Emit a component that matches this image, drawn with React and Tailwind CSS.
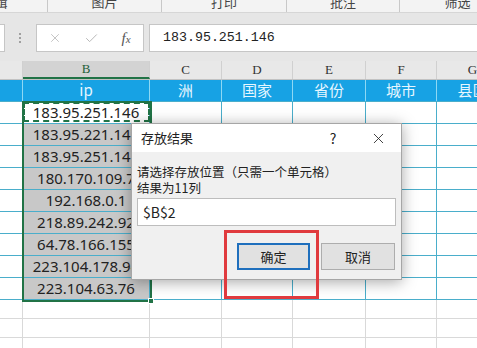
import React from "react";
import { X, Check } from "lucide-react";

const W = ["w-[23px]", "w-[127px]", "w-[72px]", "w-[71px]", "w-[73px]", "w-[71px]", "w-[72px]"];
const letters = ["", "B", "C", "D", "E", "F", "G"];
const titles = ["", "ip", "洲", "国家", "省份", "城市", "县区"];
const ips = [
  "183.95.251.146",
  "183.95.221.147",
  "183.95.251.145",
  "180.170.109.7",
  "192.168.0.1",
  "218.89.242.92",
  "64.78.166.155",
  "223.104.178.94",
  "223.104.63.76",
];

const cjk = { fontFamily: '"Noto Sans CJK SC", "Noto Sans", sans-serif' };

function Ribbon() {
  const groups = [
    ["w-[48px]", "编辑"],
    ["w-[114px]", "图片"],
    ["w-[125px]", "打印"],
    ["w-[113px]", "批注"],
    ["w-[116px]", "筛选"],
  ];
  return (
    <div className="flex h-[13px] bg-[#f3f3f3] border-b border-[#d6d6d6] overflow-hidden">
      {groups.map(([w, t], i) => (
        <div
          key={i}
          className={`${w} shrink-0 border-r border-[#c8c8c8] flex justify-center overflow-hidden`}
        >
          <span
            className={`text-[13px] leading-[13px] -mt-[5px] text-[#444] whitespace-nowrap ${i === 0 ? "ml-[-58px]" : ""}`}
            style={cjk}
          >
            {t}
          </span>
        </div>
      ))}
    </div>
  );
}

function FormulaBar() {
  return (
    <div className="bg-[#e6e6e6] pt-[11px] pb-[9px]">
      <div className="flex h-[28px]">
        <div className="w-[5px] bg-white border border-l-0 border-[#c6c6c6]" />
        <div className="w-[31px] flex items-center">
          <div className="ml-[14px] flex flex-col gap-[2px]">
            <div className="w-[2px] h-[2px] bg-[#a0a0a0]" />
            <div className="w-[2px] h-[2px] bg-[#a0a0a0]" />
            <div className="w-[2px] h-[2px] bg-[#a0a0a0]" />
          </div>
        </div>
        <div className="w-[108px] bg-white border border-[#c6c6c6] flex items-center">
          <div className="w-[36px] flex justify-center">
            <X size={14} strokeWidth={1.4} color="#b8b8b8" />
          </div>
          <div className="w-[36px] flex justify-center">
            <Check size={15} strokeWidth={1.6} color="#b8b8b8" />
          </div>
          <div
            className="w-[34px] flex justify-center italic text-[15px] text-[#555]"
            style={{ fontFamily: '"Liberation Serif", serif' }}
          >
            f<span className="text-[11px] mt-[4px]">x</span>
          </div>
        </div>
        <div className="ml-[5px] flex-1 bg-white border border-r-0 border-[#c6c6c6] flex items-center pl-[13px]">
          <span
            className="text-[13.3px] text-[#222]"
            style={{ fontFamily: '"Liberation Mono", monospace' }}
          >
            183.95.251.146
          </span>
        </div>
      </div>
    </div>
  );
}

function Grid() {
  return (
    <div>
      <div className="flex h-[19px] bg-[#e8e8e8] border-b border-[#c2c2c2]">
        {letters.map((l, i) => (
          <div
            key={i}
            className={`${W[i]} shrink-0 border-r border-[#d0d0d0] flex items-center justify-center text-[13px] ${
              i === 1 ? "bg-[#d3d3d3] text-[#1d5e3a] border-b-2 border-b-[#217346]" : "text-[#333]"
            }`}
            style={{ fontFamily: '"Liberation Serif", serif' }}
          >
            {l}
          </div>
        ))}
      </div>
      <div className="flex h-[22px] bg-[#17a2e4] border-b border-[#4aaecb]">
        {titles.map((t, i) => (
          <div
            key={i}
            className={`${W[i]} shrink-0 border-r border-[#8ed8f4] flex items-center justify-center text-[15px] text-[#e6f6ff] overflow-hidden whitespace-nowrap`}
            style={cjk}
          >
            {t}
          </div>
        ))}
      </div>
      {ips.map((ip, r) => (
        <div key={r} className="flex h-[22px] border-b border-[#4aaecb]">
          {W.map((w, i) => (
            <div
              key={i}
              className={`${w} shrink-0 border-r border-[#4aaecb] flex items-center justify-center overflow-hidden whitespace-nowrap text-[15px] text-[#222] ${
                i === 1 && r > 0 ? "bg-[#c8c8c8]" : "bg-white"
              }`}
              style={{ fontFamily: '"Noto Sans", sans-serif' }}
            >
              {i === 1 ? ip : ""}
            </div>
          ))}
        </div>
      ))}
      {[0, 1, 2].map((r) => (
        <div key={r} className="flex h-[19px] border-b border-[#d9d9d9]">
          {W.map((w, i) => (
            <div key={i} className={`${w} shrink-0 border-r border-[#d9d9d9]`} />
          ))}
        </div>
      ))}
    </div>
  );
}

function Dialog() {
  return (
    <div
      className="absolute left-[131px] top-[123px] w-[271px] h-[157px] bg-[#f0f0f0] border border-[#a6a6a6] shadow-[0_2px_14px_rgba(0,0,0,0.35)] flex flex-col"
      style={cjk}
    >
      <div className="h-[28px] bg-white flex items-center">
        <span className="ml-[9px] text-[13px] text-[#222]">存放结果</span>
        <div className="ml-auto w-[46px] flex justify-center text-[14px] text-[#222]">?</div>
        <div className="w-[45px] flex justify-center">
          <X size={17} strokeWidth={1.2} color="#222" />
        </div>
      </div>
      <div className="px-[5px] pt-[12px] text-[12.5px] leading-[16px] text-[#222]">
        <div>请选择存放位置（只需一个单元格）</div>
        <div>结果为11列</div>
        <div className="mt-[2px] h-[28px] bg-white border border-[#bdbdbd] flex items-center pl-[5px] text-[14px]">
          $B$2
        </div>
        <div className="mt-[17px] flex justify-end gap-[11px] pr-[1px]">
          <div className="w-[73px] h-[27px] bg-[#e1e1e1] border-2 border-[#1f6fbd] flex items-center justify-center text-[13px]">
            确定
          </div>
          <div className="w-[74px] h-[27px] bg-[#e1e1e1] border border-[#adadad] flex items-center justify-center text-[13px]">
            取消
          </div>
        </div>
      </div>
    </div>
  );
}

export default function App() {
  return (
    <div className="relative w-[477px] h-[348px] overflow-hidden bg-white">
      <Ribbon />
      <FormulaBar />
      <Grid />
      <div className="absolute left-[23px] top-[102px] w-[127px] h-[20px] border-2 border-dashed border-[#217346] pointer-events-none" />
      <div className="absolute left-[22px] top-[101px] w-[130px] h-[201px] border-2 border-[#217346] pointer-events-none" />
      <div className="absolute left-[148px] top-[298px] w-[6px] h-[6px] bg-[#217346] border border-white" />
      <Dialog />
      <div className="absolute left-[224px] top-[230px] w-[95px] h-[69px] border-[3px] border-[#e03a3e]" />
    </div>
  );
}
